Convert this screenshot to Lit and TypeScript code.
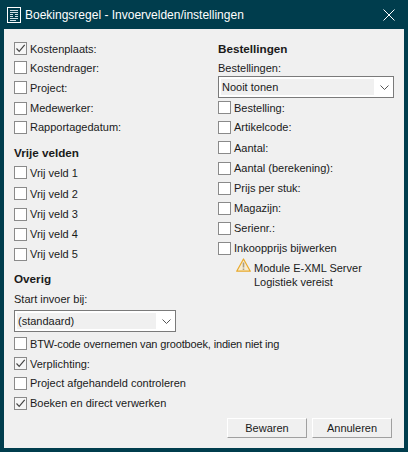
import { LitElement, html, css, svg } from "lit";
import { customElement } from "lit/decorators.js";

type Row = [string, number, boolean?];

const leftTop: Row[] = [
  ["Kostenplaats:", 19, true],
  ["Kostendrager:", 19],
  ["Project:", 21],
  ["Medewerker:", 20],
  ["Rapportagedatum:", 18],
];
const vrij: Row[] = [
  ["Vrij veld 1", 21],
  ["Vrij veld 2", 21],
  ["Vrij veld 3", 20],
  ["Vrij veld 4", 20],
  ["Vrij veld 5", 20],
];
const overig: Row[] = [
  ["BTW-code overnemen van grootboek, indien niet ing", 19],
  ["Verplichting:", 21, true],
  ["Project afgehandeld controleren", 18],
  ["Boeken en direct verwerken", 22, true],
];
const right: Row[] = [
  ["Bestelling:", 19],
  ["Artikelcode:", 20],
  ["Aantal:", 21],
  ["Aantal (berekening):", 20],
  ["Prijs per stuk:", 20],
  ["Magazijn:", 20],
  ["Serienr.:", 20],
  ["Inkoopprijs bijwerken", 20],
];

@customElement("app-root")
export class AppRoot extends LitElement {
  static styles = css`
    :host {
      display: block;
      width: 408px;
      height: 452px;
      box-sizing: border-box;
      background: #003d4d;
      padding: 0 4px 4px;
      font-family: "Liberation Sans", Arial, sans-serif;
      font-size: 11px;
      color: #1a1a1a;
    }
    .title {
      height: 29px;
      display: flex;
      align-items: center;
      color: #fff;
      font-size: 12px;
      padding-left: 3px;
      gap: 4px;
    }
    .title span {
      flex: 1;
    }
    .title svg {
      display: block;
    }
    .close {
      margin-right: 9px;
    }
    .body {
      height: 419px;
      box-sizing: border-box;
      background: #f0f0f0;
      padding: 10px;
      display: flex;
      flex-direction: column;
    }
    .cols {
      display: flex;
      flex: 1;
    }
    .left {
      width: 204px;
    }
    .rightcol {
      width: 176px;
    }
    .row {
      display: flex;
      align-items: center;
      gap: 3px;
      white-space: nowrap;
    }
    .tight {
      letter-spacing: -0.15px;
    }
    .box {
      width: 11px;
      height: 11px;
      flex: none;
      background: #fff;
      border: 1px solid #8a8a8a;
      display: flex;
      align-items: center;
      justify-content: center;
    }
    .box.on {
      background: #f6f6f6;
    }
    .box svg {
      display: block;
    }
    .head {
      font-weight: 700;
      font-size: 11.7px;
      height: 18px;
      display: flex;
      align-items: center;
    }
    .head.v {
      margin-top: 7px;
      margin-bottom: 1px;
    }
    .head.o {
      margin-top: 5px;
      margin-bottom: 1px;
    }
    .label {
      height: 16px;
      display: flex;
      align-items: center;
      margin-top: 4px;
      margin-bottom: 3px;
    }
    .label.r {
      margin-top: 3px;
      margin-bottom: 0;
    }
    .select {
      height: 22px;
      box-sizing: border-box;
      border: 1px solid #7a7a7a;
      background: #fff;
      display: flex;
      align-items: stretch;
      padding: 2px 0 2px 2px;
    }
    .select .val {
      flex: 1;
      background: #f0f0f0;
      display: flex;
      align-items: center;
      padding-left: 1px;
    }
    .select .arrow {
      width: 19px;
      box-sizing: border-box;
      padding-right: 4px;
      display: flex;
      align-items: center;
      justify-content: flex-end;
    }
    .select.small {
      width: 162px;
      margin-bottom: 2px;
    }
    .warn {
      display: flex;
      gap: 3px;
      margin-left: 18px;
      line-height: 14px;
    }
    .warn svg {
      flex: none;
      display: block;
    }
    .warn div {
      padding-top: 3px;
    }
    .buttons {
      display: flex;
      justify-content: flex-end;
      gap: 5px;
      margin-right: 2px;
    }
    .btn {
      width: 80px;
      height: 20px;
      box-sizing: border-box;
      background: #f0f0f0;
      border-top: 1px solid #fff;
      border-left: 1px solid #fff;
      border-right: 1px solid #a0a0a0;
      border-bottom: 1px solid #a0a0a0;
      display: flex;
      align-items: center;
      justify-content: center;
    }
  `;

  private check = svg`<svg width="11" height="11" viewBox="0 0 11 11"><path d="M1.5 5.5 L4.2 8.3 L9.7 1.8" fill="none" stroke="#444" stroke-width="1.2"/></svg>`;

  private rows(list: Row[]) {
    return list.map(
      ([t, h, on]) => html`<div class="row" style="height:${h}px">
        <div class="box ${on ? "on" : ""}">${on ? this.check : ""}</div>
        <div class="${t.length > 40 ? "tight" : ""}">${t}</div>
      </div>`
    );
  }

  private select(v: string, cls = "") {
    return html`<div class="select ${cls}">
      <div class="val">${v}</div>
      <div class="arrow">
        <svg width="9" height="5" viewBox="0 0 9 5"><path d="M0.5 0.5 L4.5 4.5 L8.5 0.5" fill="none" stroke="#555" /></svg>
      </div>
    </div>`;
  }

  render() {
    return html`
      <div class="title">
        <svg width="14" height="16" viewBox="0 0 14 16">
          <rect x="0.5" y="0.5" width="13" height="15" fill="none" stroke="#fff" />
          <path d="M3 3.5h8M3 5.5h8M3 7.5h3M8 7.5h3M3 9.5h3M8 9.5h3M3 11.5h8M3 13.5h6" stroke="#cfe0e6" />
        </svg>
        <span>Boekingsregel - Invoervelden/instellingen</span>
        <svg class="close" width="12" height="12" viewBox="0 0 12 12">
          <path d="M0.5 0.5 L11.5 11.5 M11.5 0.5 L0.5 11.5" stroke="#fff" stroke-width="1" />
        </svg>
      </div>
      <div class="body">
        <div class="cols">
          <div class="left">
            ${this.rows(leftTop)}
            <div class="head v">Vrije velden</div>
            ${this.rows(vrij)}
            <div class="head o">Overig</div>
            <div class="label">Start invoer bij:</div>
            ${this.select("(standaard)", "small")}
            ${this.rows(overig)}
          </div>
          <div class="rightcol">
            <div class="head">Bestellingen</div>
            <div class="label r">Bestellingen:</div>
            ${this.select("Nooit tonen")}
            ${this.rows(right)}
            <div class="warn">
              <svg width="15" height="14" viewBox="0 0 15 14">
                <path d="M7.5 1 L14.3 13.2 H0.7 Z" fill="#f7ecd0" stroke="#e8a92c" stroke-width="1.2" stroke-linejoin="round" />
                <path d="M7.5 4.5 V9.5 M7.5 10.5 V12" stroke="#a89c86" stroke-width="1.6" />
              </svg>
              <div>Module E-XML Server<br />Logistiek vereist</div>
            </div>
          </div>
        </div>
        <div class="buttons">
          <div class="btn">Bewaren</div>
          <div class="btn">Annuleren</div>
        </div>
      </div>
    `;
  }
}
